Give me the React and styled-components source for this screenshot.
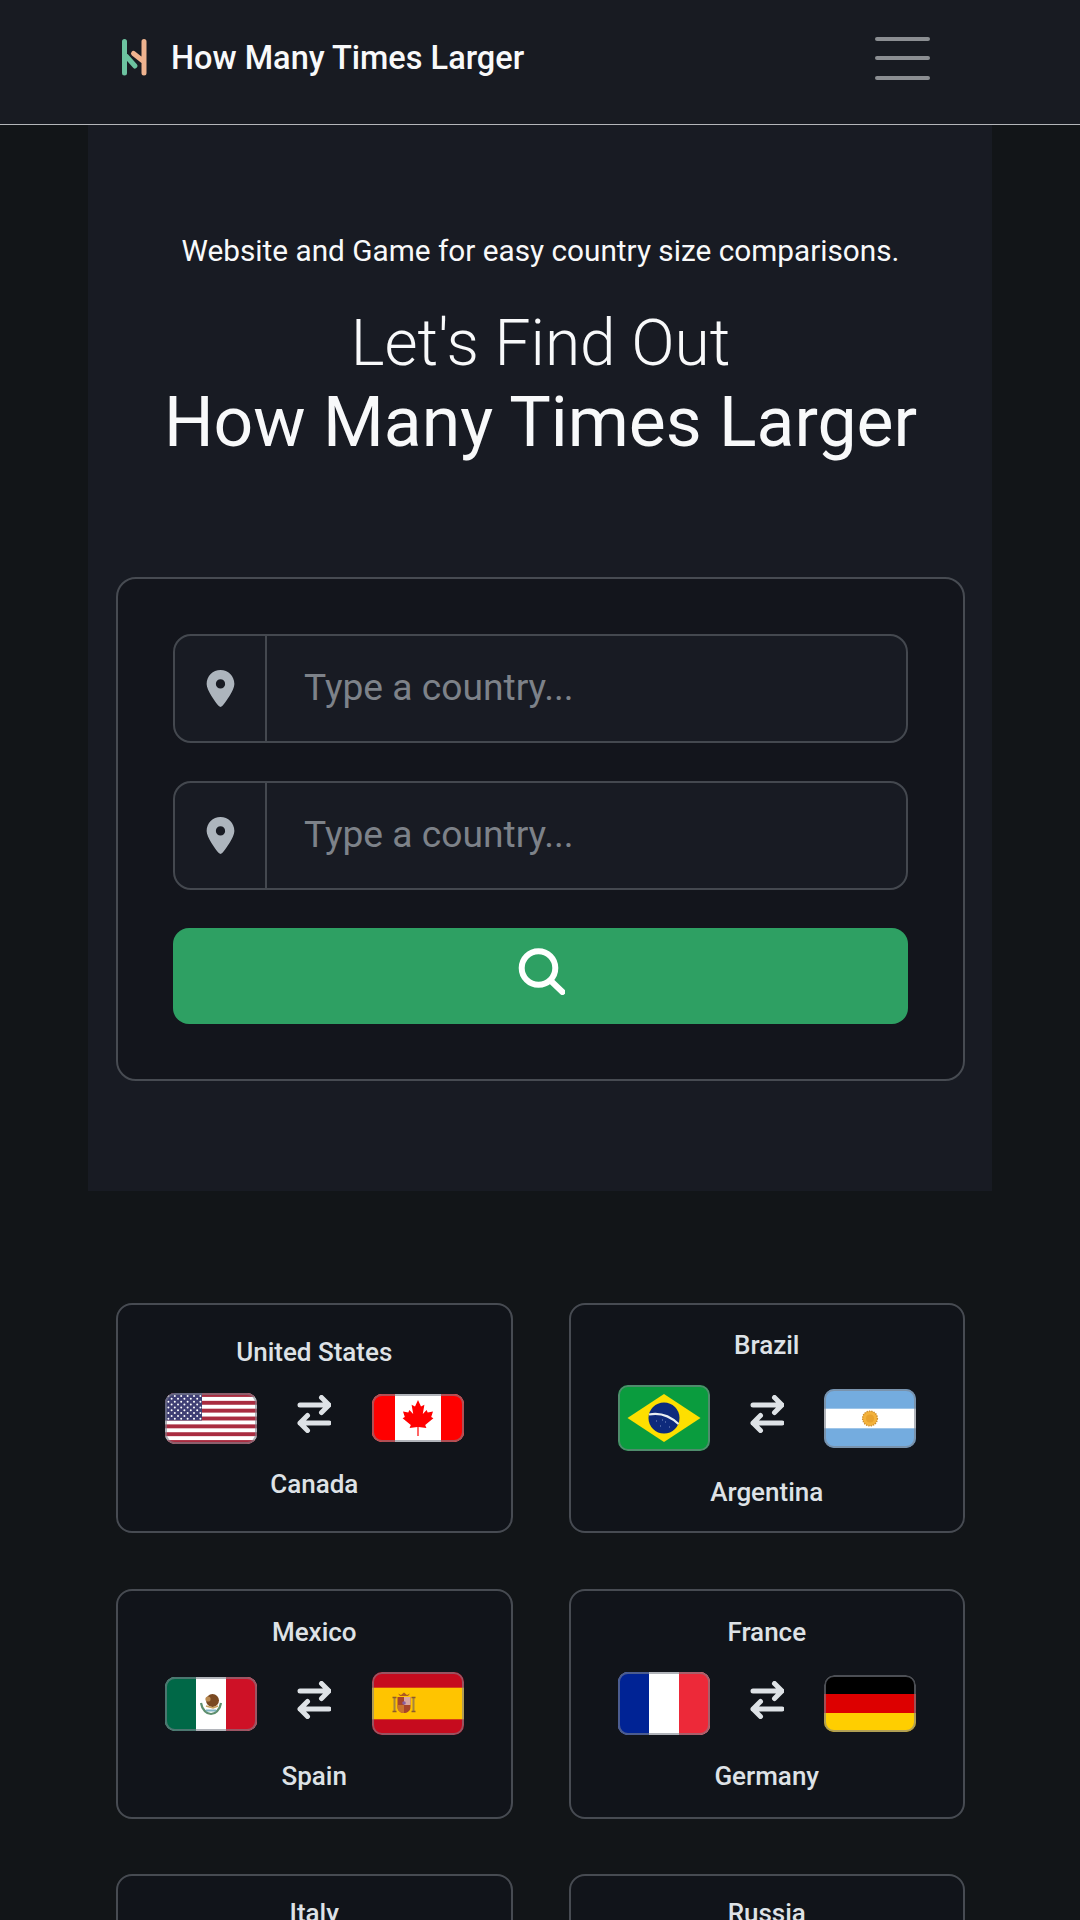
import React from "react";
import styled, { createGlobalStyle } from "styled-components";
import { FaLocationDot } from "react-icons/fa6";

const Global = createGlobalStyle`
    * { box-sizing: border-box; }
    html, body { margin: 0; padding: 0; background: #121518; }
    body { font-family: Roboto, "Liberation Sans", sans-serif; color: #dee2e6; }
`;

const Page = styled.div`
    height: 1920px;
    overflow: hidden;
    background: #121518;
`;

const Navbar = styled.nav`
    height: 125px;
    display: flex;
    align-items: center;
    justify-content: space-between;
    padding: 0 150px 8px 120px;
    background: #181b22;
    border-bottom: 1px solid #b4b6ba;
`;

const Brand = styled.a`
    display: flex;
    align-items: center;
    gap: 23px;
    font-size: 32.5px;
    font-weight: 550;
    color: #f8f9fa;
`;

const Burger = styled.button`
    width: 55px;
    height: 43px;
    padding: 0;
    display: flex;
    flex-direction: column;
    justify-content: space-between;
    background: none;
    border: 0;
`;

const BurgerLine = styled.span`
    display: block;
    height: 4px;
    border-radius: 2px;
    background: #8b8e92;
`;

const Hero = styled.section`
    margin: 0 88px;
    padding: 107px 27px 110px 28px;
    background: #181b23;
    text-align: center;
`;

const Tagline = styled.p`
    margin: 0;
    font-size: 29.75px;
    line-height: 38px;
    color: #f8f9fa;
`;

const Lead = styled.div`
    margin-top: 36px;
    font-size: 64px;
    line-height: 76px;
    font-weight: 300;
    color: #f8f9fa;
`;

const Heading = styled.h1`
    margin: 0 0 114px;
    font-size: 69.7px;
    line-height: 81px;
    font-weight: 400;
    color: #f8f9fa;
`;

const Form = styled.form`
    display: flex;
    flex-direction: column;
    gap: 38px;
    padding: 55px;
    background: #13151c;
    border: 2px solid #474b52;
    border-radius: 20px;
`;

const Field = styled.div`
    display: flex;
    height: 109px;
    background: #181b23;
    border: 2px solid #44484f;
    border-radius: 18px;
    overflow: hidden;
`;

const FieldIcon = styled.span`
    width: 92px;
    display: flex;
    align-items: center;
    justify-content: center;
    border-right: 2px solid #44484f;
    color: #adb5bd;
    font-size: 37px;
`;

const FieldInput = styled.input`
    flex: 1;
    min-width: 0;
    padding: 0 37px 4px;
    background: none;
    border: 0;
    outline: none;
    font-family: inherit;
    font-size: 37.2px;
    color: #dee2e6;
    &::placeholder { color: #7d8289; opacity: 1; }
`;

const SearchButton = styled.button`
    height: 96px;
    display: flex;
    align-items: center;
    justify-content: center;
    padding: 0 0 10px;
    background: #2ea063;
    border: 0;
    border-radius: 16px;
`;

const Pairs = styled.section`
    display: grid;
    grid-template-columns: 1fr 1fr;
    grid-auto-rows: 230px;
    gap: 55.5px 56px;
    padding: 112px 115px 0 116px;
`;

const Card = styled.a`
    display: flex;
    flex-direction: column;
    justify-content: ${(p) => (p.$partial ? "flex-start" : "center")};
    padding: ${(p) => (p.$partial ? "21px 47px" : "0 47px")};
    gap: 24.5px;
    background: #11141a;
    border: 2px solid #474b52;
    border-radius: 16px;
    text-align: center;
`;

const Name = styled.div`
    font-size: 26px;
    line-height: 32px;
    font-weight: 550;
    color: #dee2e6;
`;

const FlagRow = styled.div`
    display: flex;
    align-items: center;
    justify-content: space-between;
`;

const Frame = styled.div`
    position: relative;
    width: 92px;
    height: ${(p) => p.$h}px;
    border-radius: 10px;
    overflow: hidden;
    &::after {
        content: "";
        position: absolute;
        inset: 0;
        border: 2px solid rgba(125, 130, 140, 0.6);
        border-radius: 10px;
    }
`;

const FlagArt = styled.svg`
    display: block;
    width: 100%;
    height: 100%;
`;

const Swap = styled.svg`
    width: 34px;
    height: 38px;
    margin-bottom: 8px;
    fill: none;
    stroke: #dee2e6;
    stroke-width: 5;
    stroke-linecap: round;
    stroke-linejoin: round;
`;

function Logo() {
    return (
        <svg width="28" height="40" viewBox="0 0 28 40" fill="none" strokeWidth="5" strokeLinecap="round">
            <path d="M4.5 3.5V35M6.5 18.5L15 28" stroke="#6cc3a0" />
            <path d="M24 3.5V35M13.5 15.5L23 23" stroke="#efb38f" />
        </svg>
    );
}

function SearchIcon() {
    return (
        <svg width="48" height="48" viewBox="0 0 48 48" fill="none" stroke="#fff" strokeWidth="6" strokeLinecap="round">
            <circle cx="21.5" cy="21" r="16.8" />
            <path d="M34 34L45.5 45" />
        </svg>
    );
}

function SwapIcon() {
    return (
        <Swap viewBox="0 0 34 38">
            <path d="M3 10H32M24.5 2.5L32 10L24.5 17.5" />
            <path d="M32 28H3M10.5 20.5L3 28L10.5 35.5" />
        </Swap>
    );
}

function UsFlag() {
    const stars = [];
    for (let r = 0; r < 9; r++) {
        const n = r % 2 ? 5 : 6;
        for (let c = 0; c < n; c++) {
            stars.push(<circle key={`${r}-${c}`} cx={(r % 2 ? 6.6 : 3.4) + c * 6.4} cy={3 + r * 2.85} r="1" fill="#fff" />);
        }
    }
    return (
        <FlagArt viewBox="0 0 92 51" preserveAspectRatio="none">
            <rect width="92" height="51" fill="#fff" />
            {[0, 2, 4, 6, 8, 10, 12].map((i) => (
                <rect key={i} y={(i * 51) / 13} width="92" height={51 / 13} fill="#a92c40" />
            ))}
            <rect width="37" height={(7 * 51) / 13} fill="#3f3f74" />
            {stars}
        </FlagArt>
    );
}

function CanadaFlag() {
    return (
        <FlagArt viewBox="0 0 92 48">
            <rect width="92" height="48" fill="#fff" />
            <rect width="23" height="48" fill="#f00" />
            <rect x="69" width="23" height="48" fill="#f00" />
            <path
                fill="#f00"
                transform="translate(0 1)"
                d="M46 5L43 11.5L39.6 9.7L41.2 19L37.4 15L36.3 17.5L31 16.6L32.8 22L30.6 23.2L38.8 30L37.6 33L45.4 32V41H46.6V32L54.4 33L53.2 30L61.4 23.2L59.2 22L61 16.6L55.7 17.5L54.6 15L50.8 19L52.4 9.7L49 11.5Z"
            />
        </FlagArt>
    );
}

function BrazilFlag() {
    return (
        <FlagArt viewBox="0 0 92 66">
            <rect width="92" height="66" fill="#0a9c3e" />
            <path d="M9.5 33L46 9L82.5 33L46 57Z" fill="#fedf00" />
            <circle cx="46" cy="33" r="15.5" fill="#0e2a7c" />
            <path d="M31 29.5C41 27.5 52 31 60.5 39" fill="none" stroke="#e8eef2" strokeWidth="2.2" />
            <path d="M38 36h.8M42 41h.8M47 37h.8M51 42h.8M44 35h.8" stroke="#9fb0d8" strokeWidth="1" />
        </FlagArt>
    );
}

function ArgentinaFlag() {
    return (
        <FlagArt viewBox="0 0 92 59">
            <rect width="92" height="59" fill="#74acdf" />
            <rect y="19.7" width="92" height="19.6" fill="#fff" />
            <circle cx="46" cy="29.5" r="7.6" fill="#f3b23c" />
            <circle cx="46" cy="29.5" r="4" fill="#e8a22e" />
            <circle cx="46" cy="29.5" r="7.4" fill="none" stroke="#c98a2c" strokeWidth="1.4" strokeDasharray="1.2 1.2" />
        </FlagArt>
    );
}

function MexicoFlag() {
    return (
        <FlagArt viewBox="0 0 92 54">
            <rect width="92" height="54" fill="#fff" />
            <rect width="31" height="54" fill="#006847" />
            <rect x="61" width="31" height="54" fill="#ce1126" />
            <path d="M36 26C37 33 42 37 46 37C50 37 55 33 56 26" fill="none" stroke="#5e8f6e" strokeWidth="2.2" />
            <path d="M41 33.5H51" stroke="#7fb4c4" strokeWidth="2" />
            <ellipse cx="47.5" cy="23.5" rx="6.5" ry="6.5" fill="#7a4a22" />
            <circle cx="43" cy="22" r="2.6" fill="#b98a52" />
            <path d="M41 29L48 31L53 29" fill="none" stroke="#c9a25e" strokeWidth="1.6" />
        </FlagArt>
    );
}

function SpainFlag() {
    return (
        <FlagArt viewBox="0 0 92 63">
            <rect width="92" height="63" fill="#c60b1e" />
            <rect y="15.7" width="92" height="31.6" fill="#ffc400" />
            <path d="M26 21.5L28 24H36L38 21.5L35 23L32 20.5L29 23Z" fill="#ad5a20" />
            <path d="M25.5 25H38.5V35C38.5 39 35 41 32 41C29 41 25.5 39 25.5 35Z" fill="#a8452a" />
            <path d="M32 25H38.5V33H32Z" fill="#d8a6a0" />
            <path d="M25.5 33H32V41C29 41 25.5 39 25.5 35Z" fill="#c9722e" />
            <circle cx="32" cy="31" r="1.8" fill="#8a5ea0" />
            <path d="M22.5 26V39M41.5 26V39" stroke="#a5853f" strokeWidth="2" />
            <path d="M20.5 25.5H24.5M39.5 25.5H43.5M20.5 39.5H24.5M39.5 39.5H43.5" stroke="#8c5a2c" strokeWidth="1.4" />
        </FlagArt>
    );
}

function FranceFlag() {
    return (
        <FlagArt viewBox="0 0 92 63">
            <rect width="92" height="63" fill="#fff" />
            <rect width="31" height="63" fill="#002395" />
            <rect x="61" width="31" height="63" fill="#ed2939" />
        </FlagArt>
    );
}

function GermanyFlag() {
    return (
        <FlagArt viewBox="0 0 92 57">
            <rect width="92" height="19" fill="#000" />
            <rect y="19" width="92" height="19" fill="#d00" />
            <rect y="38" width="92" height="19" fill="#ffce00" />
        </FlagArt>
    );
}

const pairs = [
    { first: "United States", second: "Canada", a: UsFlag, ah: 51, b: CanadaFlag, bh: 48 },
    { first: "Brazil", second: "Argentina", a: BrazilFlag, ah: 66, b: ArgentinaFlag, bh: 59 },
    { first: "Mexico", second: "Spain", a: MexicoFlag, ah: 54, b: SpainFlag, bh: 63 },
    { first: "France", second: "Germany", a: FranceFlag, ah: 63, b: GermanyFlag, bh: 57 },
    { first: "Italy" },
    { first: "Russia" },
];

function Pair({ first, second, a: A, ah, b: B, bh }) {
    if (!second) {
        return (
            <Card $partial>
                <Name>{first}</Name>
            </Card>
        );
    }
    return (
        <Card>
            <Name>{first}</Name>
            <FlagRow>
                <Frame $h={ah}><A /></Frame>
                <SwapIcon />
                <Frame $h={bh}><B /></Frame>
            </FlagRow>
            <Name>{second}</Name>
        </Card>
    );
}

export default function App() {
    return (
        <Page>
            <Global />
            <Navbar>
                <Brand>
                    <Logo />
                    How Many Times Larger
                </Brand>
                <Burger aria-label="menu">
                    <BurgerLine />
                    <BurgerLine />
                    <BurgerLine />
                </Burger>
            </Navbar>
            <Hero>
                <Tagline>Website and Game for easy country size comparisons.</Tagline>
                <Lead>Let's Find Out</Lead>
                <Heading>How Many Times Larger</Heading>
                <Form>
                    <Field>
                        <FieldIcon><FaLocationDot /></FieldIcon>
                        <FieldInput placeholder="Type a country..." />
                    </Field>
                    <Field>
                        <FieldIcon><FaLocationDot /></FieldIcon>
                        <FieldInput placeholder="Type a country..." />
                    </Field>
                    <SearchButton type="button" aria-label="search"><SearchIcon /></SearchButton>
                </Form>
            </Hero>
            <Pairs>
                {pairs.map((p) => <Pair key={p.first} {...p} />)}
            </Pairs>
        </Page>
    );
}
